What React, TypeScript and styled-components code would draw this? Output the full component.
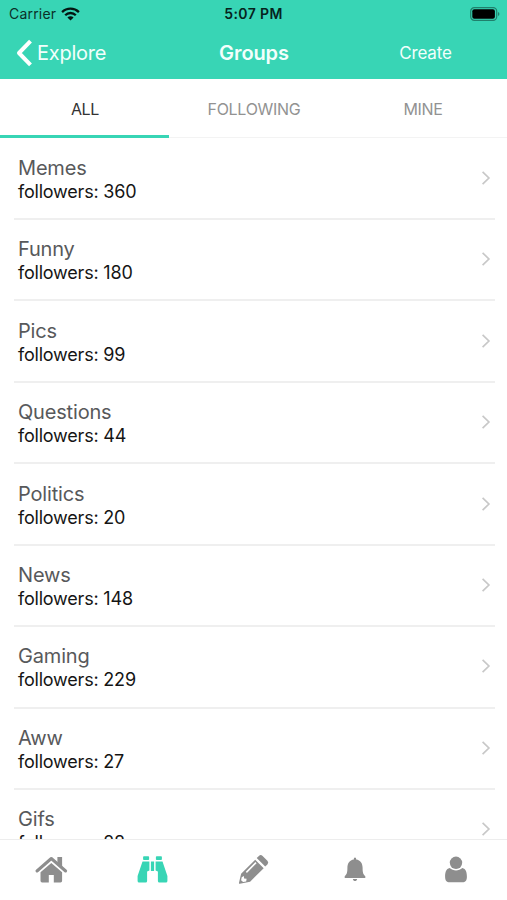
import React from "react";
import styled, { createGlobalStyle } from "styled-components";

const teal = "#38d5b5";

const GlobalStyle = createGlobalStyle`
  * { box-sizing: border-box; }
  body { margin: 0; background: #fff; font-family: Inter, "Liberation Sans", sans-serif; }
  svg { display: block; flex: none; }
`;

const Screen = styled.div`
  width: 507px;
  height: 900px;
  display: flex;
  flex-direction: column;
  overflow: hidden;
  background: #fff;
`;

const Header = styled.header`
  height: 79px;
  flex: none;
  background: ${teal};
`;

const StatusBar = styled.div`
  height: 27px;
  padding: 0 7px 0 9px;
  display: grid;
  grid-template-columns: 1fr auto 1fr;
  align-items: center;
  color: #0b3029;
  font-size: 14px;
  line-height: 27px;
`;

const Carrier = styled.div`
  display: flex;
  align-items: center;
  gap: 5px;
  letter-spacing: 0.2px;
`;

const Clock = styled.div`
  font-weight: 600;
  color: #06231d;
  letter-spacing: 0.4px;
  margin-right: 2px;
`;

const Battery = styled.div`
  display: flex;
  justify-content: flex-end;
`;

const NavBar = styled.nav`
  height: 52px;
  display: grid;
  grid-template-columns: 169px 169px 169px;
  align-items: center;
  color: #f2fffc;
`;

const BackButton = styled.div`
  display: flex;
  align-items: center;
  gap: 4px;
  padding-left: 16px;
  font-size: 20px;
  letter-spacing: -0.25px;
`;

const Title = styled.h1`
  margin: 0;
  padding-left: 1px;
  text-align: center;
  font-size: 20px;
  font-weight: 600;
  letter-spacing: -0.1px;
`;

const CreateButton = styled.div`
  padding-left: 6px;
  text-align: center;
  font-size: 17px;
  letter-spacing: -0.2px;
`;

const Tabs = styled.div`
  height: 59px;
  flex: none;
  display: grid;
  grid-template-columns: repeat(3, 1fr);
  border-bottom: 1px solid #f3f3f3;
`;

const Tab = styled.div<{ $active?: boolean }>`
  height: 59px;
  padding: 2px 0 0 1px;
  text-align: center;
  font-size: 16px;
  line-height: 57px;
  letter-spacing: -0.3px;
  color: ${(p) => (p.$active ? "#333" : "#929292")};
  border-bottom: ${(p) => (p.$active ? `3px solid ${teal}` : "0")};
`;

const List = styled.main`
  flex: 1;
  min-height: 0;
  overflow: hidden;
  padding: 0.6px 12px 0 14px;
`;

const Row = styled.div`
  height: 81.45px;
  display: flex;
  align-items: center;
  justify-content: space-between;
  padding: 0 4px;
  border-bottom: 2px solid #efefef;
`;

const RowText = styled.div`
  padding-top: 2px;
`;

const Name = styled.div`
  font-size: 20px;
  line-height: 24px;
  letter-spacing: -0.18px;
  color: #58595b;
`;

const Followers = styled.div`
  font-size: 18px;
  line-height: 23px;
  letter-spacing: -0.2px;
  color: #151515;
`;

const TabBar = styled.footer`
  height: 61px;
  flex: none;
  display: grid;
  grid-template-columns: repeat(5, 1fr);
  justify-items: center;
  border-top: 1px solid #ededed;
  background: #fff;
`;

const TabItem = styled.div<{ $active?: boolean }>`
  padding-top: 12px;
  color: ${(p) => (p.$active ? teal : "#8e8e8e")};
`;

const WifiIcon = () => (
  <svg width="19" height="14" viewBox="0 0 19 14" fill="none" stroke="#031712" strokeWidth="2.3">
    <path d="M1.1 5.1a12 12 0 0 1 16.8 0" />
    <path d="M4.2 8.2a7.5 7.5 0 0 1 10.6 0" />
    <path d="M9.5 13.6 6.4 10.5a4.4 4.4 0 0 1 6.2 0Z" fill="#031712" stroke="none" />
  </svg>
);

const BatteryIcon = () => (
  <svg width="30" height="14" viewBox="0 0 30 14">
    <rect x="0.7" y="0.7" width="26" height="12.6" rx="3.6" fill="none" stroke="#20806c" strokeWidth="1.2" />
    <rect x="2.3" y="2.3" width="22.6" height="9.4" rx="2" fill="#000" />
    <path d="M28 5v4c1.9-.6 1.9-3.4 0-4Z" fill="#20806c" />
  </svg>
);

const BackIcon = () => (
  <svg width="17" height="28" viewBox="0 0 17 28" fill="none" stroke="#fff" strokeWidth="4">
    <path d="M14.5 2.2 3 14l11.5 11.8" strokeLinejoin="round" />
  </svg>
);

const ChevronIcon = () => (
  <svg width="9" height="15" viewBox="0 0 9 15" fill="none" stroke="#c8c8c8" strokeWidth="1.7">
    <path d="M.6 .8l6.3 6.2L.6 13.2" />
  </svg>
);

const HomeIcon = () => (
  <svg width="34" height="36" viewBox="0 0 34 36" fill="currentColor">
    <path d="M23.4 5h4.7v11l-4.7-4.5Z" />
    <path d="M3 19 17.3 6.5 31.6 19" fill="none" stroke="currentColor" strokeWidth="3" strokeLinecap="round" strokeLinejoin="round" />
    <path d="M17.3 11 28.1 20.2v8.6q0 1.6-1.6 1.6h-6.7v-7.4h-5v7.4H8.1q-1.6 0-1.6-1.6v-8.6Z" />
  </svg>
);

const BinocularsIcon = () => (
  <svg width="34" height="36" viewBox="0 0 34 36" fill="currentColor">
    <rect x="8.1" y="4.3" width="6" height="3.7" rx=".8" />
    <rect x="20.9" y="4.3" width="6" height="3.7" rx=".8" />
    <path d="M7.5 9.5h6.9v9.1l-2.3.8v9.5q0 1.5-1.5 1.5H4.1q-1.5 0-1.5-1.5v-5Z" />
    <path d="M27.5 9.5h-6.9v9.1l2.3.8v9.5q0 1.5 1.5 1.5h6.5q1.5 0 1.5-1.5v-5Z" />
    <rect x="15.9" y="9.5" width="3.2" height="9.5" />
  </svg>
);

const PencilIcon = () => (
  <svg width="34" height="36" viewBox="0 0 34 36" fill="currentColor">
    <path d="M22.1 3.9q1.8-1.9 3.7 0l4.8 4.9q1.7 1.8 0 3.6l-2.2 2.2-8.5-8.5Z" transform="translate(.8)" />
    <path transform="translate(.8)" fillRule="evenodd" d="M18.4 7.7l8.5 8.5-13.6 13.5-10.3 2.1q-1 .1-.8-1l2.1-9.1ZM4.9 25.3l-.6 2.9 2 1.8 3.1-.6.4-2.6-2.5-.4-.2-2.4ZM9 19.7 18.6 10.1l1.2 1.1-9.7 9.7Z" />
  </svg>
);

const BellIcon = () => (
  <svg width="34" height="36" viewBox="0 0 34 36" fill="currentColor">
    <path d="M15.8 7.4q-.2-1.8 1.2-1.8t1.2 1.8c4.2.6 6.4 3.8 6.4 8.3 0 5 .6 6.5 2.7 8.6v1.6H6.7v-1.6c2.1-2.1 2.7-3.6 2.7-8.6 0-4.5 2.2-7.7 6.4-8.3Z" />
    <path d="M14.9 27h4.2c-.2 2.7-4 2.7-4.2 0Z" />
  </svg>
);

const PersonIcon = () => (
  <svg width="34" height="36" viewBox="0 0 34 36" fill="currentColor">
    <circle cx="17" cy="10.8" r="6.2" />
    <path d="M10.7 16.1c3.4 3.3 9.2 3.3 12.6 0 3.7.7 4.6 4.6 4.6 8.6 0 3.8-1.6 5.5-4.4 5.5h-13c-2.8 0-4.4-1.7-4.4-5.5 0-4 .9-7.9 4.6-8.6Z" />
  </svg>
);

const groups = [
  { name: "Memes", followers: 360 },
  { name: "Funny", followers: 180 },
  { name: "Pics", followers: 99 },
  { name: "Questions", followers: 44 },
  { name: "Politics", followers: 20 },
  { name: "News", followers: 148 },
  { name: "Gaming", followers: 229 },
  { name: "Aww", followers: 27 },
  { name: "Gifs", followers: 28 },
];

export default function App() {
  return (
    <Screen>
      <GlobalStyle />
      <Header>
        <StatusBar>
          <Carrier>
            Carrier <WifiIcon />
          </Carrier>
          <Clock>5:07 PM</Clock>
          <Battery>
            <BatteryIcon />
          </Battery>
        </StatusBar>
        <NavBar>
          <BackButton>
            <BackIcon />
            Explore
          </BackButton>
          <Title>Groups</Title>
          <CreateButton>Create</CreateButton>
        </NavBar>
      </Header>
      <Tabs>
        <Tab $active>ALL</Tab>
        <Tab>FOLLOWING</Tab>
        <Tab>MINE</Tab>
      </Tabs>
      <List>
        {groups.map((g) => (
          <Row key={g.name}>
            <RowText>
              <Name>{g.name}</Name>
              <Followers>followers: {g.followers}</Followers>
            </RowText>
            <ChevronIcon />
          </Row>
        ))}
      </List>
      <TabBar>
        <TabItem><HomeIcon /></TabItem>
        <TabItem $active><BinocularsIcon /></TabItem>
        <TabItem><PencilIcon /></TabItem>
        <TabItem><BellIcon /></TabItem>
        <TabItem><PersonIcon /></TabItem>
      </TabBar>
    </Screen>
  );
}
